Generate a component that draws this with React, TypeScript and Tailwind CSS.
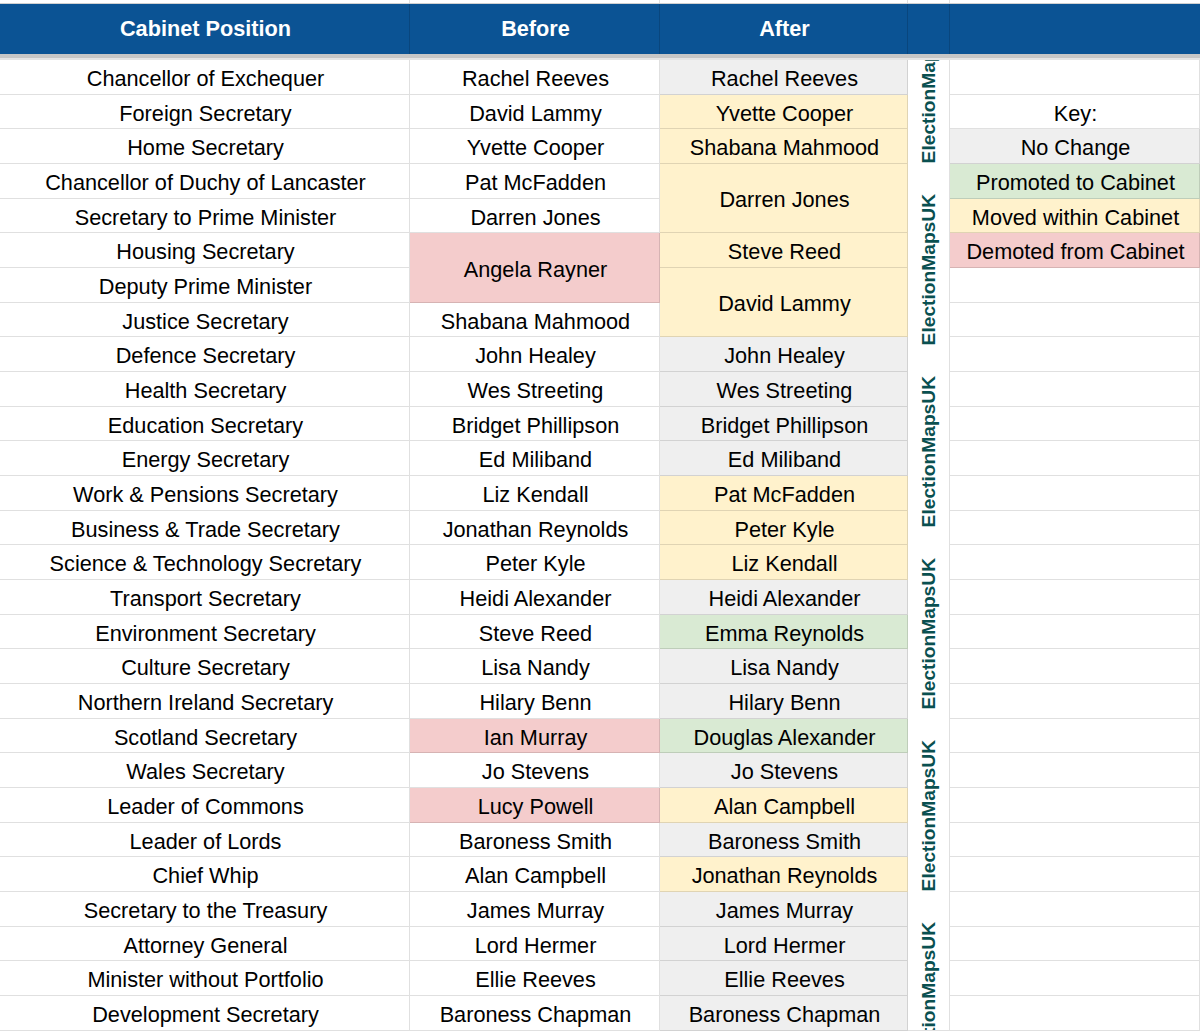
import React from "react";

type C = "w" | "g" | "y" | "r" | "gr";

const bg: Record<C, string> = {
  w: "bg-white",
  g: "bg-[#efefef]",
  y: "bg-[#fff2cc]",
  r: "bg-[#f4cccc]",
  gr: "bg-[#d9ead3]",
};

type Cell = { t: string; c: C; span?: boolean } | null;
type Row = [string, Cell, Cell];

const rows: Row[] = [
  ["Chancellor of Exchequer", { t: "Rachel Reeves", c: "w" }, { t: "Rachel Reeves", c: "g" }],
  ["Foreign Secretary", { t: "David Lammy", c: "w" }, { t: "Yvette Cooper", c: "y" }],
  ["Home Secretary", { t: "Yvette Cooper", c: "w" }, { t: "Shabana Mahmood", c: "y" }],
  ["Chancellor of Duchy of Lancaster", { t: "Pat McFadden", c: "w" }, { t: "Darren Jones", c: "y", span: true }],
  ["Secretary to Prime Minister", { t: "Darren Jones", c: "w" }, null],
  ["Housing Secretary", { t: "Angela Rayner", c: "r", span: true }, { t: "Steve Reed", c: "y" }],
  ["Deputy Prime Minister", null, { t: "David Lammy", c: "y", span: true }],
  ["Justice Secretary", { t: "Shabana Mahmood", c: "w" }, null],
  ["Defence Secretary", { t: "John Healey", c: "w" }, { t: "John Healey", c: "g" }],
  ["Health Secretary", { t: "Wes Streeting", c: "w" }, { t: "Wes Streeting", c: "g" }],
  ["Education Secretary", { t: "Bridget Phillipson", c: "w" }, { t: "Bridget Phillipson", c: "g" }],
  ["Energy Secretary", { t: "Ed Miliband", c: "w" }, { t: "Ed Miliband", c: "g" }],
  ["Work & Pensions Secretary", { t: "Liz Kendall", c: "w" }, { t: "Pat McFadden", c: "y" }],
  ["Business & Trade Secretary", { t: "Jonathan Reynolds", c: "w" }, { t: "Peter Kyle", c: "y" }],
  ["Science & Technology Secretary", { t: "Peter Kyle", c: "w" }, { t: "Liz Kendall", c: "y" }],
  ["Transport Secretary", { t: "Heidi Alexander", c: "w" }, { t: "Heidi Alexander", c: "g" }],
  ["Environment Secretary", { t: "Steve Reed", c: "w" }, { t: "Emma Reynolds", c: "gr" }],
  ["Culture Secretary", { t: "Lisa Nandy", c: "w" }, { t: "Lisa Nandy", c: "g" }],
  ["Northern Ireland Secretary", { t: "Hilary Benn", c: "w" }, { t: "Hilary Benn", c: "g" }],
  ["Scotland Secretary", { t: "Ian Murray", c: "r" }, { t: "Douglas Alexander", c: "gr" }],
  ["Wales Secretary", { t: "Jo Stevens", c: "w" }, { t: "Jo Stevens", c: "g" }],
  ["Leader of Commons", { t: "Lucy Powell", c: "r" }, { t: "Alan Campbell", c: "y" }],
  ["Leader of Lords", { t: "Baroness Smith", c: "w" }, { t: "Baroness Smith", c: "g" }],
  ["Chief Whip", { t: "Alan Campbell", c: "w" }, { t: "Jonathan Reynolds", c: "y" }],
  ["Secretary to the Treasury", { t: "James Murray", c: "w" }, { t: "James Murray", c: "g" }],
  ["Attorney General", { t: "Lord Hermer", c: "w" }, { t: "Lord Hermer", c: "g" }],
  ["Minister without Portfolio", { t: "Ellie Reeves", c: "w" }, { t: "Ellie Reeves", c: "g" }],
  ["Development Secretary", { t: "Baroness Chapman", c: "w" }, { t: "Baroness Chapman", c: "g" }],
];

const key: ({ t: string; c: C } | null)[] = [
  null,
  { t: "Key:", c: "w" },
  { t: "No Change", c: "g" },
  { t: "Promoted to Cabinet", c: "gr" },
  { t: "Moved within Cabinet", c: "y" },
  { t: "Demoted from Cabinet", c: "r" },
];

const cellBase =
  "flex items-center justify-center whitespace-nowrap pt-[4px] pl-[2px] border-r border-b border-[rgba(0,0,0,0.12)] text-[21.7px] text-black leading-none";

function Watermark() {
  return (
    <div className="col-start-4 row-start-1 row-span-28 overflow-hidden bg-white border-r border-b border-[rgba(0,0,0,0.12)]">
      <div className="mt-[-79px] flex flex-col">
        {[0, 1, 2, 3, 4, 5].map((i) => (
          <div key={i} className="h-[182px] flex items-end justify-center">
            <span className="[writing-mode:vertical-rl] rotate-180 font-bold text-[19.2px] leading-none text-[#0a5050]">
              ElectionMapsUK
            </span>
          </div>
        ))}
      </div>
    </div>
  );
}

export default function App() {
  const cells: React.ReactNode[] = [];
  rows.forEach((r, i) => {
    cells.push(
      <div key={`p${i}`} className={`${cellBase} bg-white`}>
        {r[0]}
      </div>
    );
    [r[1], r[2]].forEach((c, j) => {
      if (!c) return;
      cells.push(
        <div
          key={`c${i}-${j}`}
          className={`${cellBase} ${bg[c.c]} ${c.span ? "row-span-2" : ""}`}
        >
          {c.t}
        </div>
      );
    });
    const k = key[i];
    cells.push(
      <div key={`k${i}`} className={`${cellBase} ${k ? bg[k.c] : "bg-white"}`}>
        {k ? k.t : ""}
      </div>
    );
  });

  return (
    <div className="w-[1200px] h-[1032px] overflow-hidden bg-white font-['Liberation_Sans',Arial,sans-serif]">
      {/* top strip */}
      <div className="grid grid-cols-[410px_250px_248px_42px_250px] h-[4px] border-b border-[#d0d0d0]">
        <div className="border-r border-[#e0e0e0]" />
        <div className="border-r border-[#e0e0e0]" />
        <div className="border-r border-[#e0e0e0]" />
        <div className="border-r border-[#e0e0e0]" />
        <div />
      </div>
      {/* header */}
      <div className="grid grid-cols-[410px_250px_248px_42px_250px] h-[50px] bg-[#0b5394] text-white font-bold text-[21.7px]">
        <div className="flex items-center justify-center pl-[2px] border-r border-[rgba(0,0,0,0.15)]">Cabinet Position</div>
        <div className="flex items-center justify-center pl-[2px] border-r border-[rgba(0,0,0,0.15)]">Before</div>
        <div className="flex items-center justify-center pl-[2px] border-r border-[rgba(0,0,0,0.15)]">After</div>
        <div className="border-r border-[rgba(0,0,0,0.15)]" />
        <div />
      </div>
      {/* freeze line */}
      <div className="h-[4px] bg-[#c6c6c6]" />
      <div className="h-[2px] bg-[#e4e4e4]" />
      {/* body */}
      <div className="grid grid-cols-[410px_250px_248px_42px_250px] grid-rows-[repeat(28,34.68px)]">
        <Watermark />
        {cells}
      </div>
    </div>
  );
}
